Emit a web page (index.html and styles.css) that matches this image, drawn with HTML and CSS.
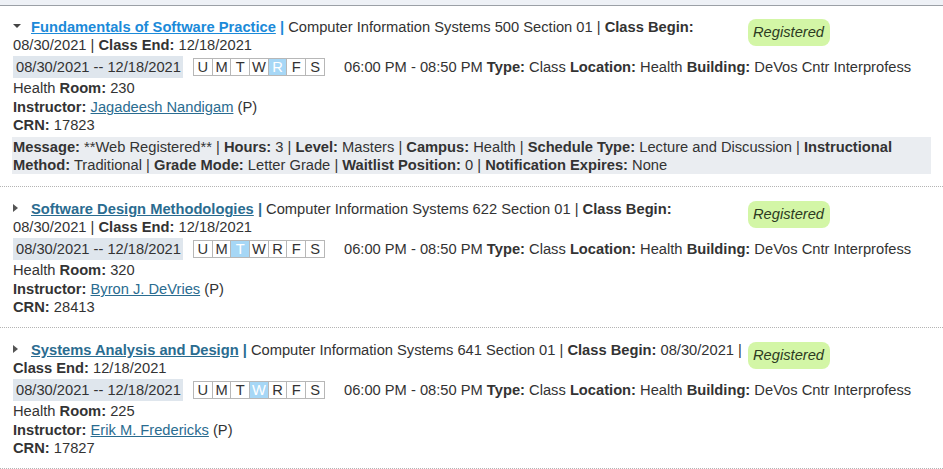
FILE: index.html
```html
<!DOCTYPE html>
<html lang="en">
<head>
<meta charset="utf-8">
<title>Registered Courses</title>
<link rel="stylesheet" href="styles.css">
</head>
<body>
<div class="topbar"></div>
<div class="list">
  <div class="course">
    <div class="head">
      <div class="head-text"><span class="caret down"></span><a class="title hot" href="#">Fundamentals of Software Practice</a> <span class="pipe hot">|</span> <span>Computer Information Systems 500 Section 01</span> | <b>Class Begin:</b> <span>08/30/2021</span> | <b>Class End:</b> <span>12/18/2021</span></div>
      <span class="badge">Registered</span>
    </div>
    <div class="meeting"><span class="dates">08/30/2021 -- 12/18/2021</span><span class="days"><span class="d">U</span><span class="d">M</span><span class="d">T</span><span class="d">W</span><span class="d on">R</span><span class="d">F</span><span class="d">S</span></span><span class="time">06:00 PM - 08:50 PM</span> <b>Type:</b> <span>Class</span> <b>Location:</b> <span>Health</span> <b>Building:</b> <span>DeVos Cntr Interprofess</span> <span>Health</span> <b>Room:</b> <span>230</span></div>
    <div class="line"><b>Instructor:</b> <a class="person" href="#">Jagadeesh Nandigam</a> (P)</div>
    <div class="line"><b>CRN:</b> 17823</div>
    <div class="message"><b>Message:</b> <span>**Web Registered**</span> | <b>Hours:</b> <span>3</span> | <b>Level:</b> <span>Masters</span> | <b>Campus:</b> <span>Health</span> | <b>Schedule Type:</b> <span>Lecture and Discussion</span> | <b>Instructional</b> <b>Method:</b> <span>Traditional</span> | <b>Grade Mode:</b> <span>Letter Grade</span> | <b>Waitlist Position:</b> <span>0</span> | <b>Notification Expires:</b> <span>None</span></div>
  </div>
  <div class="course">
    <div class="head">
      <div class="head-text"><span class="caret right"></span><a class="title" href="#">Software Design Methodologies</a> <span class="pipe">|</span> <span>Computer Information Systems 622 Section 01</span> | <b>Class Begin:</b> <span>08/30/2021</span> | <b>Class End:</b> <span>12/18/2021</span></div>
      <span class="badge">Registered</span>
    </div>
    <div class="meeting"><span class="dates">08/30/2021 -- 12/18/2021</span><span class="days"><span class="d">U</span><span class="d">M</span><span class="d on">T</span><span class="d">W</span><span class="d">R</span><span class="d">F</span><span class="d">S</span></span><span class="time">06:00 PM - 08:50 PM</span> <b>Type:</b> <span>Class</span> <b>Location:</b> <span>Health</span> <b>Building:</b> <span>DeVos Cntr Interprofess</span> <span>Health</span> <b>Room:</b> <span>320</span></div>
    <div class="line"><b>Instructor:</b> <a class="person" href="#">Byron J. DeVries</a> (P)</div>
    <div class="line"><b>CRN:</b> 28413</div>
  </div>
  <div class="course">
    <div class="head">
      <div class="head-text"><span class="caret right"></span><a class="title" href="#">Systems Analysis and Design</a> <span class="pipe">|</span> <span>Computer Information Systems 641 Section 01</span> | <b>Class Begin:</b> <span>08/30/2021</span> <span>|</span> <b>Class End:</b> <span>12/18/2021</span></div>
      <span class="badge">Registered</span>
    </div>
    <div class="meeting"><span class="dates">08/30/2021 -- 12/18/2021</span><span class="days"><span class="d">U</span><span class="d">M</span><span class="d">T</span><span class="d on">W</span><span class="d">R</span><span class="d">F</span><span class="d">S</span></span><span class="time">06:00 PM - 08:50 PM</span> <b>Type:</b> <span>Class</span> <b>Location:</b> <span>Health</span> <b>Building:</b> <span>DeVos Cntr Interprofess</span> <span>Health</span> <b>Room:</b> <span>225</span></div>
    <div class="line"><b>Instructor:</b> <a class="person" href="#">Erik M. Fredericks</a> (P)</div>
    <div class="line"><b>CRN:</b> 17827</div>
  </div>
</div>
</body>
</html>
```
FILE: styles.css
```css
html, body {
  margin: 0;
  padding: 0;
  background: #ffffff;
}
body {
  font-family: "Liberation Sans", Arial, sans-serif;
  font-size: 14.7px;
  line-height: 18px;
  color: #333333;
}
b {
  font-weight: bold;
}
.topbar {
  height: 5px;
  background: #eef1f6;
  border-bottom: 1px solid #9ba0a6;
}
.course {
  padding: 13px 12px 11px 13px;
  border-bottom: 1px dotted #b4b4b4;
}
.course:first-child {
  padding-top: 12px;
}
.head {
  display: flex;
  align-items: flex-start;
}
.head-text {
  width: 729px;
  flex: none;
}
.caret {
  display: inline-block;
  width: 0;
  height: 0;
  vertical-align: middle;
  position: relative;
  top: -2px;
}
.caret.down {
  border-left: 4px solid transparent;
  border-right: 4px solid transparent;
  border-top: 4px solid #444;
  margin-right: 10px;
}
.caret.right {
  border-top: 4px solid transparent;
  border-bottom: 4px solid transparent;
  border-left: 5px solid #555;
  margin-right: 13px;
}
.title {
  font-weight: bold;
  color: #2a6c90;
  text-decoration: underline;
}
.pipe {
  font-weight: bold;
  color: #2a6c90;
}
.title.hot, .pipe.hot {
  color: #1b8ad9;
}
.badge {
  flex: none;
  margin-left: 6px;
  margin-top: 1px;
  padding: 4px 6px 4px 5px;
  line-height: 19px;
  border-radius: 8px;
  background: #d3f6a6;
  font-style: italic;
  color: #2c3a22;
}
.meeting {
  margin-bottom: 1px;
}
.dates {
  display: inline-block;
  padding: 2px 2px 2px 3px;
  margin: 2px 0 1px;
  background: #dfe6ed;
}
.days {
  display: inline-table;
  border-collapse: collapse;
  table-layout: fixed;
  width: 131px;
  margin-left: 10px;
  margin-right: 19px;
}
.d {
  display: table-cell;
  border: 1px solid #b7b7b7;
  text-align: center;
  line-height: 16px;
  padding: 0;
}
.d.on {
  background: #a6d7f6;
  color: #ffffff;
}
.person {
  color: #2a6c90;
  text-decoration: underline;
}
.message {
  margin-top: 3px;
  margin-bottom: 1px;
  padding: 1px 1px 0 1px;
  background: #eaedf1;
  margin-left: -1px;
}
```
